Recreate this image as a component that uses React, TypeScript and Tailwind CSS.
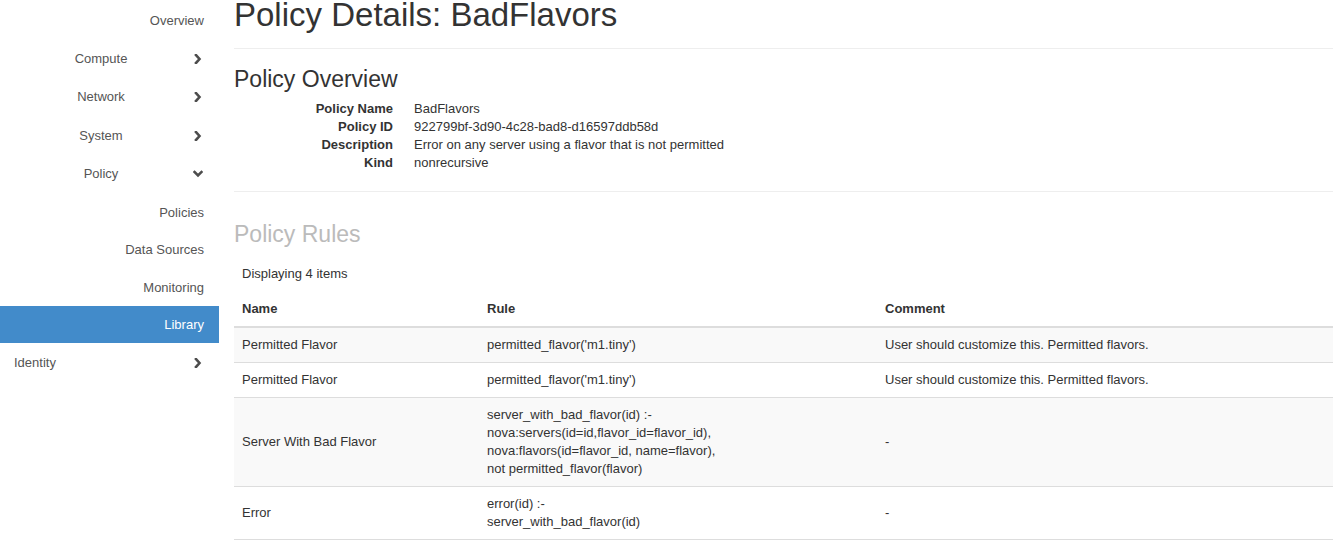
import React from 'react';

type NavRow = {
  label: string;
  height: string;
  kind: 'link' | 'group' | 'sub' | 'groupLeft';
  open?: boolean;
  active?: boolean;
};

const navRows: NavRow[] = [
  { label: 'Overview', height: 'h-[38px]', kind: 'link' },
  { label: 'Compute', height: 'h-[38px]', kind: 'group' },
  { label: 'Network', height: 'h-[39px]', kind: 'group' },
  { label: 'System', height: 'h-[38px]', kind: 'group' },
  { label: 'Policy', height: 'h-[39px]', kind: 'group', open: true },
  { label: 'Policies', height: 'h-[38px]', kind: 'sub' },
  { label: 'Data Sources', height: 'h-[37px]', kind: 'sub' },
  { label: 'Monitoring', height: 'h-[38px]', kind: 'sub' },
  { label: 'Library', height: 'h-[37px]', kind: 'sub', active: true },
  { label: 'Identity', height: 'h-[38px]', kind: 'groupLeft' },
];

const overview = [
  { label: 'Policy Name', value: 'BadFlavors' },
  { label: 'Policy ID', value: '922799bf-3d90-4c28-bad8-d16597ddb58d' },
  { label: 'Description', value: 'Error on any server using a flavor that is not permitted' },
  { label: 'Kind', value: 'nonrecursive' },
];

const rules = [
  { name: 'Permitted Flavor', rule: ["permitted_flavor('m1.tiny')"], comment: 'User should customize this. Permitted flavors.' },
  { name: 'Permitted Flavor', rule: ["permitted_flavor('m1.tiny')"], comment: 'User should customize this. Permitted flavors.' },
  {
    name: 'Server With Bad Flavor',
    rule: [
      'server_with_bad_flavor(id) :-',
      'nova:servers(id=id,flavor_id=flavor_id),',
      'nova:flavors(id=flavor_id, name=flavor),',
      'not permitted_flavor(flavor)',
    ],
    comment: '-',
  },
  { name: 'Error', rule: ['error(id) :-', 'server_with_bad_flavor(id)'], comment: '-' },
];

const Chevron: React.FC<{ down?: boolean }> = ({ down }) => (
  <svg width="10" height="10" viewBox="0 0 10 10" className="shrink-0 text-[#4d4d4d]">
    {down ? (
      <polyline points="1.5,3 5,6.5 8.5,3" fill="none" stroke="currentColor" strokeWidth="2.6" strokeLinecap="square" />
    ) : (
      <polyline points="3,1 6.5,5 3,9" fill="none" stroke="currentColor" strokeWidth="2.6" strokeLinecap="square" />
    )}
  </svg>
);

const Sidebar: React.FC = () => (
  <aside className="w-[219px] shrink-0 pt-[1px] text-[13px] text-[#555]">
    {navRows.map((row) => {
      if (row.kind === 'group') {
        return (
          <div key={row.label} className={`${row.height} flex items-center pl-4 pr-4 pt-[1px]`}>
            <span className="w-[170px] text-center">{row.label}</span>
            <span className="ml-auto">
              <Chevron down={row.open} />
            </span>
          </div>
        );
      }
      if (row.kind === 'groupLeft') {
        return (
          <div key={row.label} className={`${row.height} flex items-center pl-[14px] pr-4 pt-[1px]`}>
            <span className="flex-1">{row.label}</span>
            <Chevron />
          </div>
        );
      }
      return (
        <div
          key={row.label}
          className={`${row.height} flex items-center justify-end pr-[15px] pt-[1px] ${
            row.active ? 'bg-[#428bca] text-white' : ''
          }`}
        >
          {row.label}
        </div>
      );
    })}
  </aside>
);

export default function App() {
  return (
    <div className="flex min-h-[544px] bg-white font-['Liberation_Sans',Arial,sans-serif] text-[13px] leading-[18px] text-[#333] overflow-hidden">
      <Sidebar />

      <main className="flex-1 pl-[15px] pr-[2px]">
        <h1 className="-mt-[3px] text-[33px] leading-[36px] font-normal">Policy Details: BadFlavors</h1>
        <div className="mt-[15px] border-t border-[#eee]" />

        <h3 className="mt-[18px] text-[23px] leading-[25px] font-normal">Policy Overview</h3>
        <dl className="mt-2 grid grid-cols-[159px_1fr] gap-x-[21px]">
          {overview.map((item) => (
            <React.Fragment key={item.label}>
              <dt className="text-right font-bold">{item.label}</dt>
              <dd>{item.value}</dd>
            </React.Fragment>
          ))}
        </dl>
        <div className="mt-[19px] border-t border-[#eee]" />

        <h3 className="mt-[30px] text-[23px] leading-[25px] font-normal text-[#bbb]">Policy Rules</h3>
        <div className="mt-[18px] pl-2">Displaying 4 items</div>

        <table className="mt-[9px] w-full border-collapse">
          <thead>
            <tr className="border-b-2 border-[#ddd]">
              <th className="w-[245px] px-2 py-2 text-left font-bold">Name</th>
              <th className="w-[398px] px-2 py-2 text-left font-bold">Rule</th>
              <th className="px-2 py-2 text-left font-bold">Comment</th>
            </tr>
          </thead>
          <tbody>
            {rules.map((r, i) => (
              <tr key={i} className={`border-b border-[#ddd] ${i % 2 === 0 ? 'bg-[#f9f9f9]' : 'bg-white'}`}>
                <td className="px-2 py-2 align-middle">{r.name}</td>
                <td className="px-2 py-2 align-middle">
                  {r.rule.map((line) => (
                    <div key={line}>{line}</div>
                  ))}
                </td>
                <td className="px-2 py-2 align-middle">{r.comment}</td>
              </tr>
            ))}
          </tbody>
        </table>
      </main>
    </div>
  );
}
